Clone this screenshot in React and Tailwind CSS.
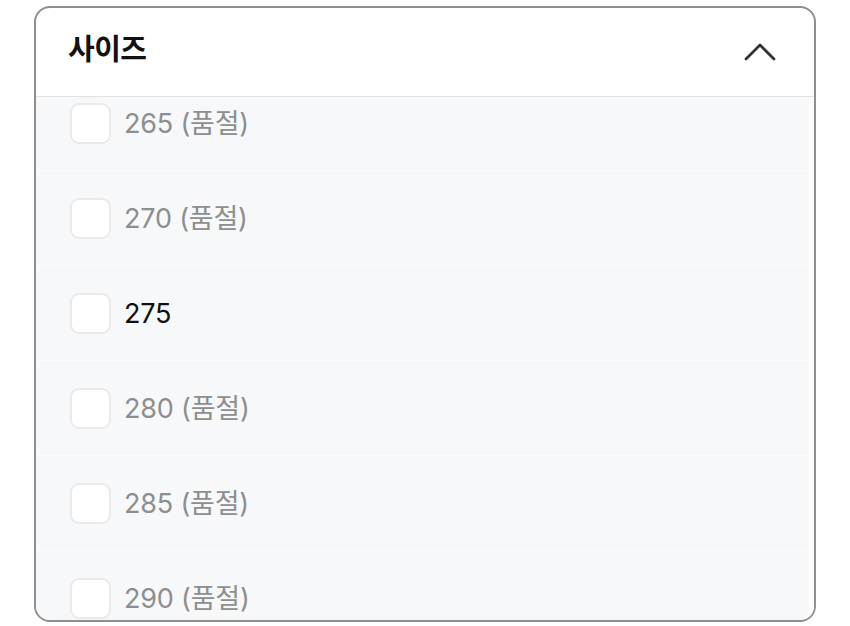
const sizes = [
  { label: "265", soldOut: true },
  { label: "270", soldOut: true },
  { label: "275", soldOut: false },
  { label: "280", soldOut: true },
  { label: "285", soldOut: true },
  { label: "290", soldOut: true },
];

const ChevronUp = () => (
  <svg width="34" height="20" viewBox="0 0 34 20" fill="none">
    <path d="M3 17 L17 3 L31 17" stroke="#333" strokeWidth="2.8" strokeLinecap="round" strokeLinejoin="round" />
  </svg>
);

export default function App() {
  return (
    <div
      className="w-[850px] h-[626px] bg-white pt-[6px] pl-[34px]"
      style={{ fontFamily: 'Inter, "Noto Sans CJK KR", sans-serif' }}
    >
      <div className="w-[782px] h-[616px] border-2 border-[#8f8f8f] rounded-[16px] overflow-hidden flex flex-col bg-white">
        <div className="h-[89px] shrink-0 flex items-center justify-between pl-[32px] pr-[37px] border-b border-[#e2e2e2]">
          <span className="text-[29px] font-bold text-[#111] tracking-[-0.5px] -mt-[5px]">사이즈</span>
          <ChevronUp />
        </div>
        <div className="flex-1 overflow-hidden bg-[#f7f8fa] border-r-[5px] border-white">
          <div className="-mt-[21px]">
            {sizes.map((s) => (
              <div
                key={s.label}
                className="h-[95px] flex items-center gap-[13px] pl-[34px] border-b border-[#fbfcfd]"
              >
                <div className="w-[41px] h-[41px] rounded-[9px] border-2 border-[#e9eaec] bg-white" />
                <span
                  className={
                    "text-[27px] tracking-[-0.2px] mt-[3px] " +
                    (s.soldOut ? "text-[#8e8e8e]" : "text-[#111]")
                  }
                >
                  {s.label}
                  {s.soldOut ? " (품절)" : ""}
                </span>
              </div>
            ))}
          </div>
        </div>
      </div>
    </div>
  );
}
